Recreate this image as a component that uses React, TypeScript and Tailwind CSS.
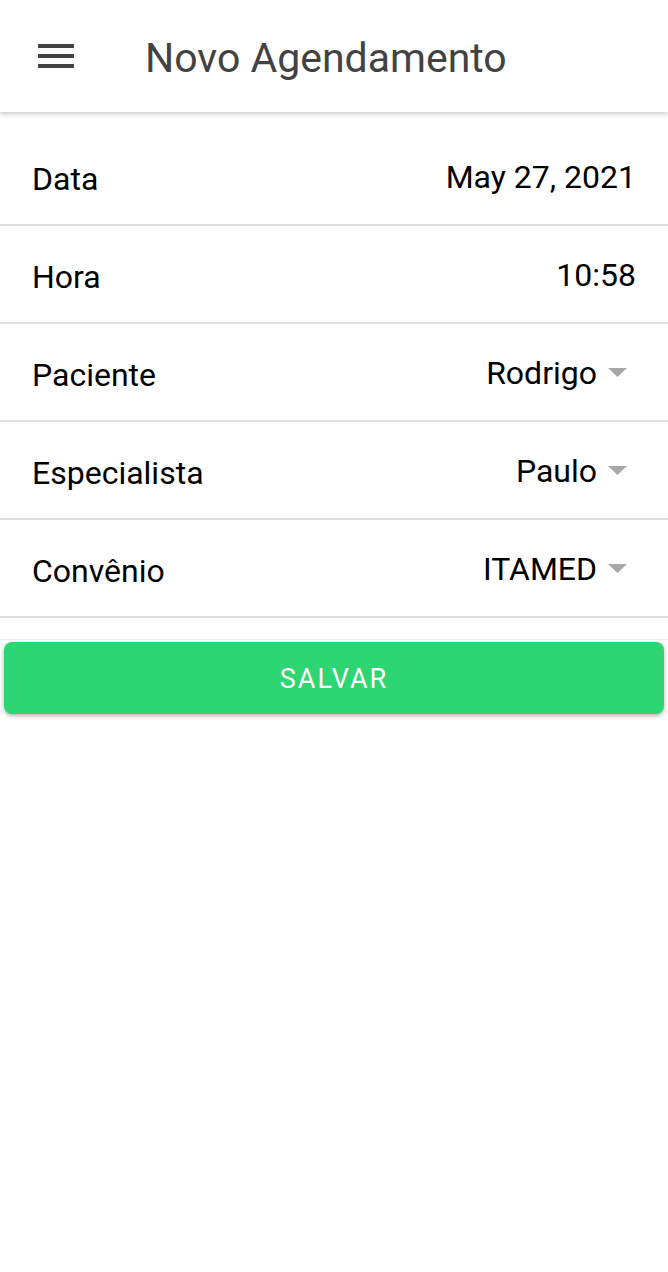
import React from "react";

const rows = [
  { label: "Data", value: "May 27, 2021", select: false },
  { label: "Hora", value: "10:58", select: false },
  { label: "Paciente", value: "Rodrigo", select: true },
  { label: "Especialista", value: "Paulo", select: true },
  { label: "Convênio", value: "ITAMED", select: true },
];

function Caret() {
  return (
    <svg width="19" height="9" viewBox="0 0 19 9" className="ml-[11px] mr-[9px] shrink-0">
      <path d="M0 0 L19 0 L9.5 9 Z" fill="#a8a8a8" />
    </svg>
  );
}

export default function App() {
  return (
    <div className="min-h-[1272px] w-[668px] bg-white font-['Roboto',sans-serif]">
      <header className="relative z-10 flex h-[112px] items-center bg-white shadow-[0_2px_5px_rgba(0,0,0,0.22)]">
        <button className="ml-[38px] flex w-[36px] flex-col gap-[6px]">
          <span className="block h-[4px] w-[36px] bg-[#424242]" />
          <span className="block h-[4px] w-[36px] bg-[#424242]" />
          <span className="block h-[4px] w-[36px] bg-[#424242]" />
        </button>
        <h1 className="ml-[71px] pt-[5px] text-[41px] leading-none text-[#424242]">Novo Agendamento</h1>
      </header>

      <div className="pt-[16px]">
        {rows.map((row) => (
          <div key={row.label} className="flex h-[98px] items-center border-b-2 border-[#dedede] pl-[32px] pr-[32px]">
            <span className="pt-[5px] text-[32px] leading-none text-black">{row.label}</span>
            <div className="ml-auto flex items-center">
              <span className="pt-[2px] text-[32px] leading-none text-black">{row.value}</span>
              {row.select && <Caret />}
            </div>
          </div>
        ))}
      </div>

      <div className="mt-[21px] h-px bg-[#ececec]" />
      <div className="px-[4px] pt-[2px]">
        <button className="flex h-[72px] w-full items-center justify-center rounded-[8px] bg-[#2ed573] pt-[3px] text-[27px] tracking-[2px] text-white shadow-[0_2px_4px_rgba(0,0,0,0.3)]">
          SALVAR
        </button>
      </div>
    </div>
  );
}
